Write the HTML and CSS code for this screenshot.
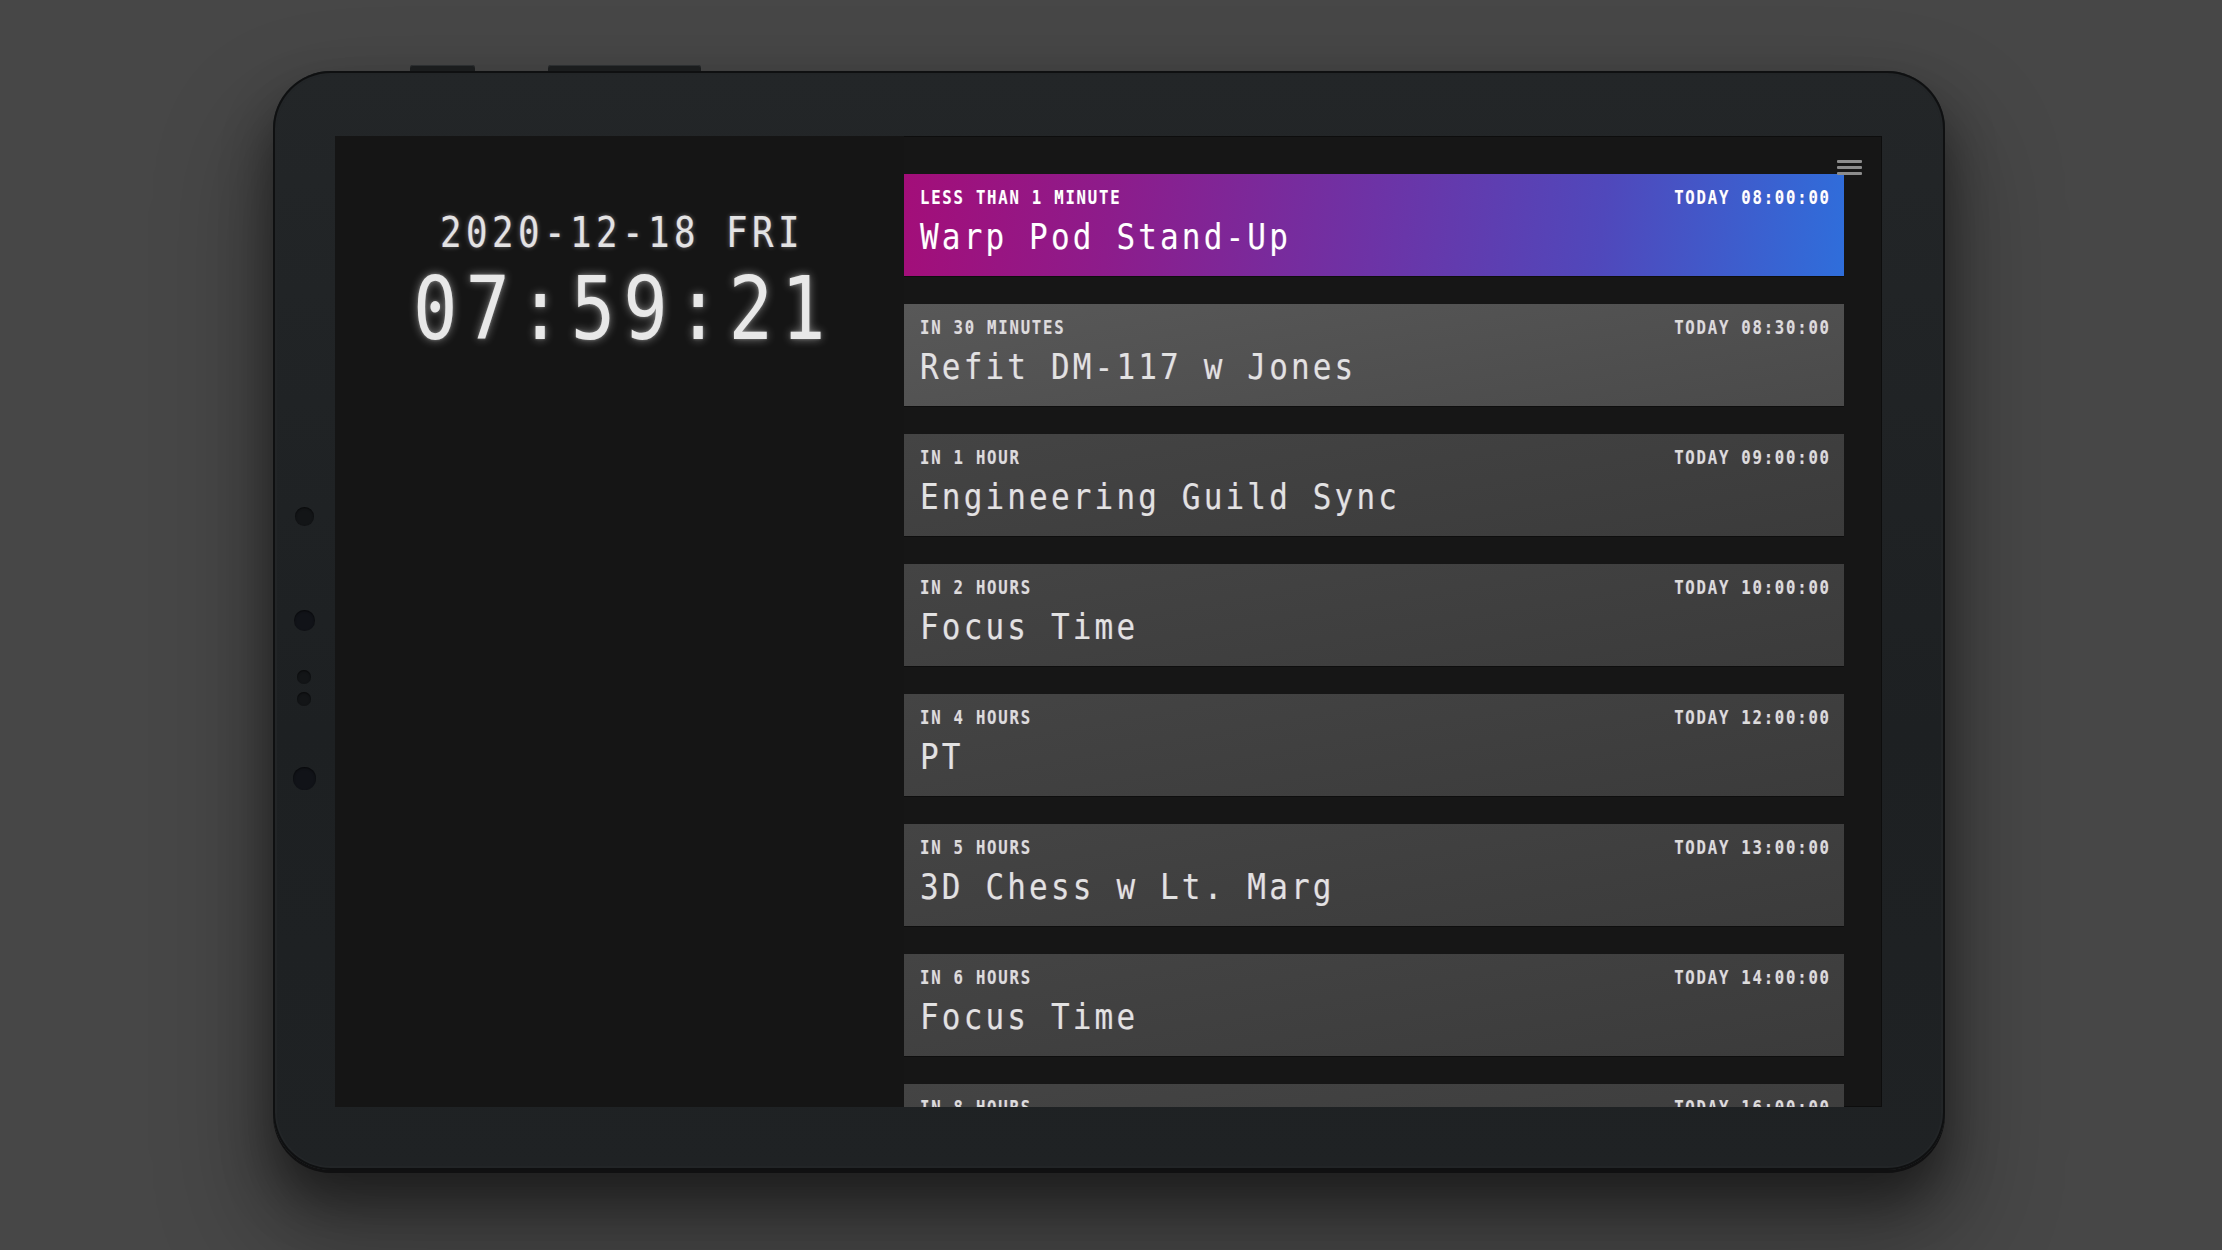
FILE: index.html
```html
<!DOCTYPE html>
<html lang="en">
<head>
<meta charset="utf-8">
<title>Agenda</title>
<link rel="stylesheet" href="styles.css">
</head>
<body>
<div class="stage">
  <div class="tablet">
    <div class="hw-buttons"><span class="hw-btn hw-btn-a"></span><span class="hw-btn hw-btn-b"></span></div>
    <div class="sensors">
      <span class="dot dot-1"></span>
      <span class="dot dot-2"></span>
      <span class="dot dot-3"></span>
      <span class="dot dot-4"></span>
      <span class="dot dot-5"></span>
    </div>
    <div class="screen">
      <div class="clock">
        <div class="date">2020-12-18 FRI</div>
        <div class="time">07:59:21</div>
      </div>
      <div class="agenda">
        <div class="card card-now">
          <div class="card-head"><span class="when">LESS THAN 1 MINUTE</span><span class="at">TODAY 08:00:00</span></div>
          <div class="card-title">Warp Pod Stand-Up</div>
        </div>
        <div class="card card-next">
          <div class="card-head"><span class="when">IN 30 MINUTES</span><span class="at">TODAY 08:30:00</span></div>
          <div class="card-title">Refit DM-117 w Jones</div>
        </div>
        <div class="card">
          <div class="card-head"><span class="when">IN 1 HOUR</span><span class="at">TODAY 09:00:00</span></div>
          <div class="card-title">Engineering Guild Sync</div>
        </div>
        <div class="card">
          <div class="card-head"><span class="when">IN 2 HOURS</span><span class="at">TODAY 10:00:00</span></div>
          <div class="card-title">Focus Time</div>
        </div>
        <div class="card">
          <div class="card-head"><span class="when">IN 4 HOURS</span><span class="at">TODAY 12:00:00</span></div>
          <div class="card-title">PT</div>
        </div>
        <div class="card">
          <div class="card-head"><span class="when">IN 5 HOURS</span><span class="at">TODAY 13:00:00</span></div>
          <div class="card-title">3D Chess w Lt. Marg</div>
        </div>
        <div class="card">
          <div class="card-head"><span class="when">IN 6 HOURS</span><span class="at">TODAY 14:00:00</span></div>
          <div class="card-title">Focus Time</div>
        </div>
        <div class="card">
          <div class="card-head"><span class="when">IN 8 HOURS</span><span class="at">TODAY 16:00:00</span></div>
        </div>
      </div>
      <div class="menu"><span></span><span></span><span></span></div>
    </div>
  </div>
</div>
</body>
</html>
```

FILE: styles.css
```css
html, body {
  margin: 0;
  padding: 0;
}
body {
  width: 2222px;
  height: 1250px;
  overflow: hidden;
  background: #474747;
  font-family: "DejaVu Sans Mono", "Liberation Mono", monospace;
}
.stage {
  padding: 71px 0 0 273px;
}
.tablet {
  position: relative;
  width: 1672px;
  height: 1099px;
  box-sizing: border-box;
  padding: 65px 63px 63px 62px;
  border-radius: 58px;
  background: linear-gradient(180deg, #232628 0%, #1d2022 60%, #1f2224 100%);
  box-shadow:
    inset 0 0 0 2px #0f1011,
    inset 0 0 0 4px #222527,
    0 3px 0 #101011,
    0 30px 50px rgba(0, 0, 0, 0.45),
    0 60px 100px 20px rgba(0, 0, 0, 0.25);
}
.hw-buttons {
  position: absolute;
  top: -6px;
  left: 137px;
  display: flex;
  gap: 73px;
}
.hw-btn {
  display: block;
  height: 6px;
  background: #1b1d1e;
  border-radius: 3px 3px 0 0;
  box-shadow: inset 0 1px 0 #2c2f31;
}
.hw-btn-a { width: 65px; }
.hw-btn-b { width: 153px; }
.sensors {
  position: absolute;
  left: 20px;
  top: 436px;
  width: 22px;
  display: flex;
  flex-direction: column;
  align-items: center;
}
.dot {
  display: block;
  border-radius: 50%;
  background: #131517;
  box-shadow: inset 0 1px 2px rgba(0, 0, 0, 0.6);
}
.dot-1 { width: 19px; height: 19px; }
.dot-2 { width: 21px; height: 21px; margin-top: 84px; background: #111318; }
.dot-3 { width: 14px; height: 14px; margin-top: 39px; }
.dot-4 { width: 14px; height: 14px; margin-top: 8px; }
.dot-5 { width: 23px; height: 23px; margin-top: 61px; background: #111318; }

.screen {
  position: relative;
  display: flex;
  height: 100%;
  overflow: hidden;
  background: #161616;
  box-shadow: inset 0 0 0 1px #0d0d0d;
}
.clock {
  flex: none;
  width: 569px;
  box-sizing: border-box;
  padding-top: 76px;
  display: flex;
  flex-direction: column;
  align-items: center;
  gap: 12px;
  background: #151515;
  color: #e3e3e3;
  text-shadow: 0 0 6px rgba(255, 255, 255, 0.35), -1px 0 0 rgba(255, 80, 80, 0.25), 1px 0 0 rgba(80, 160, 255, 0.25);
}
.date {
  font-size: 42px;
  line-height: 1;
  letter-spacing: 5.3px;
  padding-left: 5.3px;
  transform: scaleX(0.85);
}
.time {
  font-size: 87px;
  line-height: 1;
  letter-spacing: 9.5px;
  padding-left: 9.5px;
  transform: scaleX(0.85);
  color: #e8e8e8;
  text-shadow: 0 0 10px rgba(255, 255, 255, 0.45), 0 0 3px rgba(255, 255, 255, 0.3);
}
.agenda {
  flex: none;
  width: 940px;
  padding-top: 38px;
  display: flex;
  flex-direction: column;
  gap: 28px;
}
.card {
  flex: none;
  height: 102px;
  box-sizing: border-box;
  padding: 13px 16px 0 16px;
  background: linear-gradient(170deg, #444444 0%, #3b3b3b 100%);
  box-shadow: 0 1px 0 rgba(0, 0, 0, 0.35);
  color: #e2e2e2;
  text-shadow: -1px 0 0 rgba(255, 90, 90, 0.22), 1px 0 0 rgba(90, 170, 255, 0.22);
}
.card-next {
  background: linear-gradient(170deg, #585858 0%, #4a4a4a 100%);
}
.card-now {
  background: linear-gradient(96deg, #a30e79 0%, #8d1c8b 22%, #6d33a6 50%, #5048bb 74%, #2f6edb 100%);
  color: #ffffff;
}
.card-head {
  display: flex;
  justify-content: space-between;
  font-size: 20px;
  font-weight: 700;
  line-height: 1;
  color: #dcdcdc;
}
.when,
.at {
  display: block;
  white-space: nowrap;
  letter-spacing: 2.3px;
  transform: scaleX(0.78);
}
.when {
  transform-origin: left center;
}
.at {
  margin-right: -2.3px;
  transform-origin: right center;
}
.card-now .card-head {
  color: #ffffff;
}
.card-title {
  margin-top: 12px;
  font-size: 36px;
  line-height: 1;
  white-space: nowrap;
  letter-spacing: 3.7px;
  transform: scaleX(0.86);
  transform-origin: left center;
}
.menu {
  position: absolute;
  top: 24px;
  right: 20px;
  width: 25px;
  display: flex;
  flex-direction: column;
  gap: 3px;
}
.menu span {
  display: block;
  height: 3px;
  background: #8c8c8c;
  border-radius: 1px;
}
```
